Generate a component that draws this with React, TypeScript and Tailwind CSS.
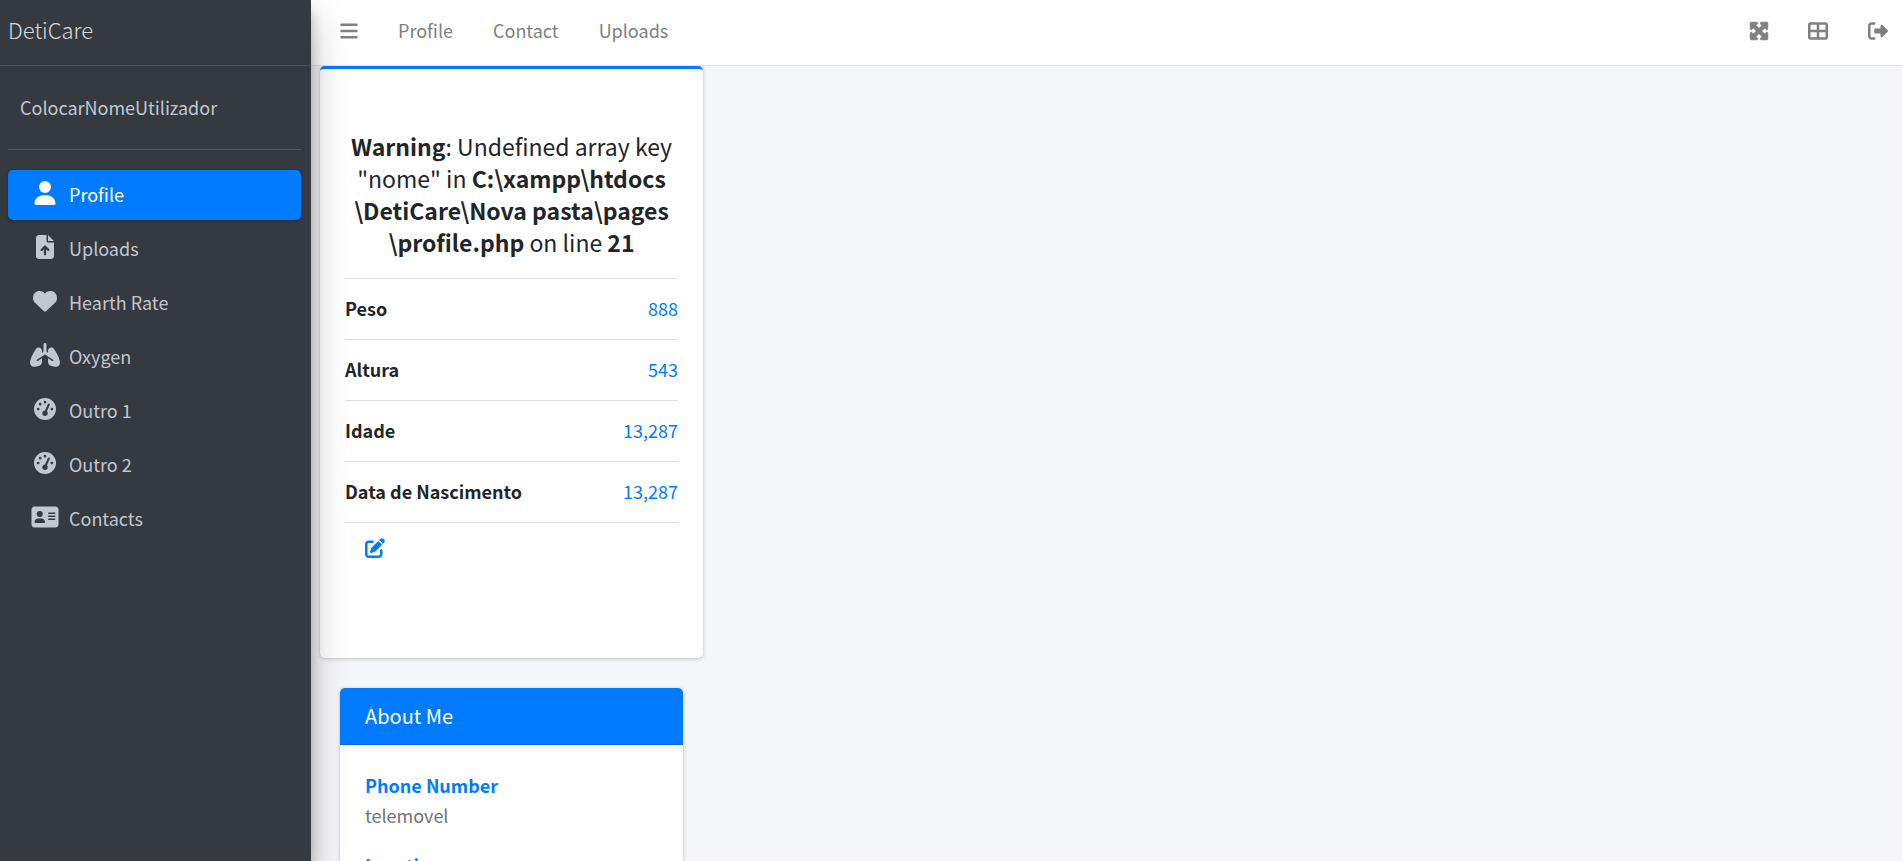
import React from "react";
import type { IconType } from "react-icons";
import {
  FaAddressCard,
  FaBars,
  FaFileArrowUp,
  FaGaugeHigh,
  FaHeart,
  FaLungs,
  FaMaximize,
  FaPenToSquare,
  FaRightFromBracket,
  FaTableCellsLarge,
  FaUser,
} from "react-icons/fa6";

type MenuItem = { label: string; icon: IconType; size: string; active?: boolean };

const menu: MenuItem[] = [
  { label: "Profile", icon: FaUser, size: "h-6 w-6", active: true },
  { label: "Uploads", icon: FaFileArrowUp, size: "h-6 w-6" },
  { label: "Hearth Rate", icon: FaHeart, size: "h-6 w-6" },
  { label: "Oxygen", icon: FaLungs, size: "h-6 w-[30px]" },
  { label: "Outro 1", icon: FaGaugeHigh, size: "h-6 w-[22px]" },
  { label: "Outro 2", icon: FaGaugeHigh, size: "h-6 w-[22px]" },
  { label: "Contacts", icon: FaAddressCard, size: "h-6 w-7" },
];

const facts = [
  { label: "Peso", value: "888" },
  { label: "Altura", value: "543" },
  { label: "Idade", value: "13,287" },
  { label: "Data de Nascimento", value: "13,287" },
];

const about = [
  { label: "Phone Number", value: "telemovel" },
  { label: "Location", value: "morada" },
];

function Sidebar() {
  return (
    <aside className="relative z-10 flex w-[311px] shrink-0 flex-col bg-[#343a40] text-[#c2c7d0] shadow-[0_18px_35px_rgba(0,0,0,0.25),0_12px_12px_rgba(0,0,0,0.22)]">
      <a
        href="#"
        className="flex h-[66px] items-center border-b border-[#4b545c] px-2 pb-2 text-[22px] leading-8 font-light text-white/80"
      >
        DetiCare
      </a>
      <div className="flex flex-col px-2 pr-[10px]">
        <div className="mb-5 border-b border-[#4f5962] pt-[27px] pb-7 pl-3">
          <a href="#" className="block leading-7">
            ColocarNomeUtilizador
          </a>
        </div>
        <nav className="flex flex-col gap-1">
          {menu.map(({ label, icon: Icon, size, active }) => (
            <a
              key={label}
              href="#"
              className={
                active
                  ? "flex h-[50px] items-center gap-[7px] rounded-[5px] bg-[#007bff] pl-5 text-white shadow-[0_1px_4px_rgba(0,0,0,0.12),0_1px_2px_rgba(0,0,0,0.24)]"
                  : "flex h-[50px] items-center gap-[7px] rounded-[5px] pl-5"
              }
            >
              <span className="flex w-[34px] justify-center pb-1">
                <Icon className={size} />
              </span>
              <span className="pb-0.5">{label}</span>
            </a>
          ))}
        </nav>
      </div>
    </aside>
  );
}

function TopBar() {
  return (
    <header className="flex h-[66px] shrink-0 items-center justify-between border-b border-[#dee2e6] bg-white pr-[14px] pb-1.5 pl-[29px] text-[#808080]">
      <nav className="flex items-center gap-10">
        <button type="button" aria-label="Toggle menu" className="pt-0.5">
          <FaBars className="h-5 w-[18px]" />
        </button>
        <a href="#">Profile</a>
        <a href="#">Contact</a>
        <a href="#">Uploads</a>
      </nav>
      <div className="flex items-center gap-10 pt-0.5">
        <button type="button" aria-label="Fullscreen" className="-mx-px">
          <FaMaximize className="h-5 w-5 stroke-current stroke-[24]" />
        </button>
        <button type="button" aria-label="Control panel">
          <FaTableCellsLarge className="h-5 w-5" />
        </button>
        <a href="#" aria-label="Sign out">
          <FaRightFromBracket className="h-5 w-5" />
        </a>
      </div>
    </header>
  );
}

function ProfileCard() {
  return (
    <section className="w-[383px] rounded-[5px] border-t-[3px] border-[#007bff] bg-white px-[25px] pt-[61px] pb-[100px] shadow-[0_0_1px_rgba(0,0,0,0.125),0_1px_4px_rgba(0,0,0,0.2)]">
      <h3 className="mb-5 text-center text-[23px] leading-8">
        <b>Warning</b>: Undefined array key "nome" in{" "}
        <b>
          C:\xampp\htdocs
          <wbr />
          \DetiCare\Nova pasta\pages
          <wbr />
          \profile.php
        </b>{" "}
        on line <b>21</b>
      </h3>
      <ul className="border-t border-black/13">
        {facts.map(({ label, value }) => (
          <li
            key={label}
            className="flex items-center justify-between border-b border-black/13 pt-[14px] pb-4 leading-[30px]"
          >
            <b>{label}</b>
            <a href="#" className="text-[#007bff]">
              {value}
            </a>
          </li>
        ))}
      </ul>
      <button type="button" aria-label="Edit profile" className="mt-[15px] ml-5 block text-[#007bff]">
        <FaPenToSquare className="h-5 w-5" />
      </button>
    </section>
  );
}

function AboutCard() {
  return (
    <section className="mx-5 w-[343px] rounded-[5px] bg-white shadow-[0_0_1px_rgba(0,0,0,0.125),0_1px_4px_rgba(0,0,0,0.2)]">
      <h3 className="rounded-t-[5px] border-b border-black/13 bg-[#007bff] px-[25px] py-[13px] text-xl leading-[30px] text-white">
        About Me
      </h3>
      <dl className="flex flex-col gap-5 p-[25px] leading-[30px]">
        {about.map(({ label, value }) => (
          <div key={label}>
            <dt className="font-bold text-[#007bff]">{label}</dt>
            <dd className="text-[#6c757d]">{value}</dd>
          </div>
        ))}
      </dl>
    </section>
  );
}

export default function App() {
  return (
    <div className="flex h-screen overflow-hidden bg-[#f4f6f9] font-['Noto_Sans_CJK_SC','Source_Sans_Pro',sans-serif] text-lg text-[#212529]">
      <Sidebar />
      <div className="flex min-w-0 flex-1 flex-col">
        <TopBar />
        <main className="flex min-h-0 flex-1 flex-col gap-[30px] overflow-y-auto pl-[9px] [scrollbar-width:none]">
          <ProfileCard />
          <AboutCard />
        </main>
      </div>
    </div>
  );
}
